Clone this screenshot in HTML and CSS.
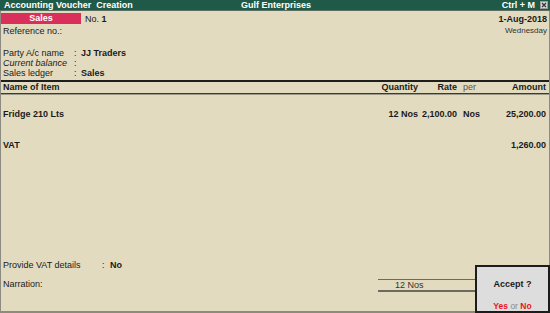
FILE: index.html
```html
<!DOCTYPE html>
<html lang="en">
<head>
    <meta charset="UTF-8">
    <title>Accounting Voucher Creation</title>
    <link rel="stylesheet" href="styles.css">
</head>
<body>
    <div class="titlebar">
        <span class="title-left">Accounting Voucher&nbsp; Creation</span>
        <span class="title-center">Gulf Enterprises</span>
        <span class="title-right">
            Ctrl + M
            <svg class="close-box" width="8" height="8" viewBox="0 0 8 8">
                <rect x="0.5" y="0.5" width="7" height="7" fill="#d8d8d8" stroke="#9a9a9a"/>
                <path d="M2 2 L6 6 M6 2 L2 6" stroke="#333" stroke-width="1.2"/>
            </svg>
        </span>
    </div>

    <div class="frame">
        <div class="head-row">
            <div class="voucher-type">Sales</div>
            <div class="voucher-no">No. <b>1</b></div>
            <div class="voucher-date">1-Aug-2018</div>
        </div>
        <div class="ref-row">
            <span>Reference no.:</span>
            <span class="weekday">Wednesday</span>
        </div>

        <div class="party">
            <div class="field"><span class="label">Party A/c name</span><span class="colon">:</span><b>JJ Traders</b></div>
            <div class="field italic"><span class="label">Current balance</span><span class="colon">:</span></div>
            <div class="field"><span class="label">Sales ledger</span><span class="colon">:</span><b>Sales</b></div>
        </div>

        <div class="item-head">
            <span class="col-name">Name of Item</span>
            <span class="col-qty">Quantity</span>
            <span class="col-rate">Rate</span>
            <span class="col-per">per</span>
            <span class="col-amt">Amount</span>
        </div>

        <div class="items">
            <div class="item-row first">
                <span class="col-name">Fridge 210 Lts</span>
                <span class="col-qty">12 Nos</span>
                <span class="col-rate">2,100.00</span>
                <span class="col-per bold">Nos</span>
                <span class="col-amt">25,200.00</span>
            </div>
            <div class="item-row tax">
                <span class="col-name">VAT</span>
                <span class="col-qty"></span>
                <span class="col-rate"></span>
                <span class="col-per"></span>
                <span class="col-amt">1,260.00</span>
            </div>
        </div>

        <div class="footer">
            <div class="vat-row"><span class="vat-label">Provide VAT details</span><span class="colon">:</span><b>No</b></div>
            <div class="narration-row">
                <span class="narration">Narration:</span>
                <div class="total-qty">12 Nos</div>
            </div>
        </div>

        <div class="accept-box">
            <div class="accept-title">Accept ?</div>
            <div class="accept-options"><span class="red">Yes</span> <span class="or">or</span> <span class="red">No</span></div>
        </div>
    </div>
</body>
</html>
```

FILE: styles.css
```css
body {
    margin: 0;
    width: 550px;
    height: 313px;
    overflow: hidden;
    font-family: "Liberation Sans", Arial, sans-serif;
    font-size: 9px;
    color: #1a1a1a;
    background: #e3dbbf;
}
b, .bold {
    font-weight: bold;
}

/* title bar */
.titlebar {
    height: 11px;
    line-height: 10px;
    background: #1f5a49;
    color: #ffffff;
    font-weight: bold;
    display: grid;
    grid-template-columns: 1fr auto 1fr;
    padding: 0 2px 0 4px;
    border-bottom: 1px solid #5b6e62;
    box-sizing: border-box;
}
.title-center {
    text-align: center;
}
.title-right {
    display: flex;
    justify-content: flex-end;
    align-items: center;
    gap: 5px;
}
.close-box {
    display: block;
}

/* main frame */
.frame {
    position: relative;
    height: 302px;
    box-sizing: border-box;
    border-left: 1px solid #8d8b80;
    border-right: 1px solid #8d8b80;
    border-bottom: 2px solid #8d8b80;
    display: flex;
    flex-direction: column;
}
.head-row {
    display: flex;
    align-items: center;
    margin-top: 2px;
    height: 11px;
}
.voucher-type {
    width: 80px;
    height: 11px;
    line-height: 11px;
    background: #d9305b;
    color: #ffffff;
    font-weight: bold;
    text-align: center;
}
.voucher-no {
    margin-left: 4px;
}
.voucher-date {
    margin-left: auto;
    margin-right: 2px;
    font-weight: bold;
}
.ref-row {
    display: flex;
    justify-content: space-between;
    margin-top: 2px;
    line-height: 10px;
    padding: 0 2px;
}
.weekday {
    font-size: 8px;
    color: #333;
}

.party {
    margin-top: 12px;
    padding-left: 2px;
}
.field {
    line-height: 10px;
    height: 10px;
    display: flex;
}
.field .label {
    width: 71px;
}
.field .colon {
    width: 7px;
}
.italic .label {
    font-style: italic;
}

/* item table */
.item-head,
.item-row {
    display: grid;
    grid-template-columns: 1fr 48px 39px 33px 56px;
    padding: 0 3px 0 2px;
}
.item-head {
    margin-top: 2px;
    border-top: 2px solid #1e1e1e;
    border-bottom: 1px solid #3a3a3a;
    box-shadow: 0 1px 0 #9e9a8a;
    line-height: 11px;
    font-weight: bold;
}
.col-qty,
.col-rate,
.col-amt {
    text-align: right;
}
.col-per {
    padding-left: 6px;
}
.item-head .col-per {
    font-weight: normal;
    color: #555;
}
.items {
    flex: 1;
}
.item-row {
    line-height: 10px;
    font-weight: bold;
}
.item-row.first {
    margin-top: 15px;
}
.item-row.tax {
    margin-top: 21px;
}

/* footer */
.footer {
    padding-left: 2px;
    padding-bottom: 19px;
}
.vat-row {
    display: flex;
    line-height: 10px;
}
.vat-label {
    width: 99px;
}
.vat-row .colon {
    width: 8px;
}
.narration-row {
    display: flex;
    margin-top: 9px;
    align-items: flex-start;
}
.narration {
    width: 375px;
    line-height: 10px;
}
.total-qty {
    flex: 1;
    border-top: 1px solid #6d6b60;
    border-bottom: 2px solid #6d6b60;
    line-height: 10px;
    padding-left: 17px;
    color: #333;
}

/* accept dialog */
.accept-box {
    position: absolute;
    right: -1px;
    bottom: -2px;
    width: 75px;
    height: 48px;
    box-sizing: border-box;
    background: #dddddd;
    border: 2px solid #1c1c1c;
    text-align: center;
}
.accept-title {
    font-weight: bold;
    margin-top: 12px;
    line-height: 10px;
}
.accept-options {
    margin-top: 12px;
    font-weight: bold;
    font-size: 8.5px;
}
.red {
    color: #e8141e;
}
.or {
    color: #8a8a8a;
    font-weight: normal;
}
```
